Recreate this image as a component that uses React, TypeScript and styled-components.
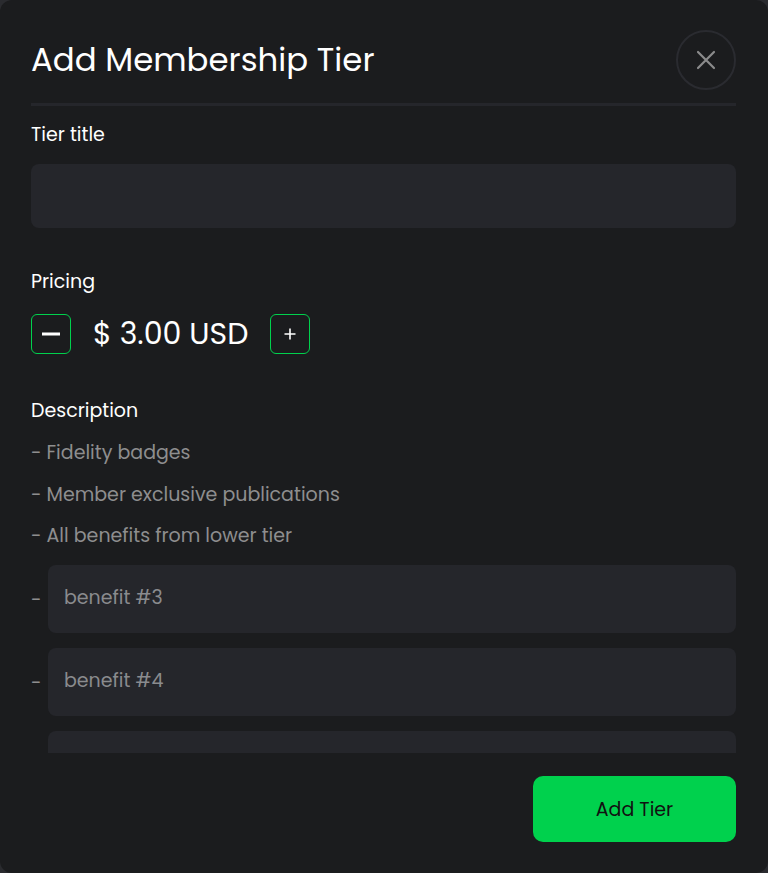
import React, {useState} from 'react';
import styled, {createGlobalStyle} from 'styled-components';

const GlobalStyle = createGlobalStyle`
    html, body {
        margin: 0;
        padding: 0;
        background: #2a2b2f;
    }
    * {
        box-sizing: border-box;
    }
`;

const Modal = styled.div`
    width: 768px;
    height: 873px;
    background: #1b1c1e;
    border-radius: 12px;
    display: flex;
    flex-direction: column;
    font-family: Poppins, Inter, "Open Sans", sans-serif;
    color: #ffffff;
    overflow: hidden;
`;

const Header = styled.div`
    padding: 30px 32px 0 31px;
`;

const HeaderRow = styled.div`
    display: flex;
    align-items: center;
    justify-content: space-between;
    height: 60px;
`;

const Title = styled.h1`
    margin: 0;
    font-size: 32.4px;
    font-weight: 400;
`;

const CloseButton = styled.button`
    width: 60px;
    height: 60px;
    border-radius: 50%;
    border: 2px solid #2a2b30;
    background: transparent;
    display: flex;
    align-items: center;
    justify-content: center;
    padding: 0;
    cursor: pointer;
`;

const Divider = styled.div`
    height: 3px;
    margin-top: 13px;
    background: #25262b;
`;

const Body = styled.div`
    flex: 1;
    overflow: hidden;
    padding: 15px 32px 0 31px;
    display: flex;
    flex-direction: column;
`;

const Label = styled.div<{$gap?: number}>`
    font-size: 19px;
    line-height: 27px;
    font-weight: 400;
    margin-top: ${p => p.$gap ?? 0}px;
`;

const TextInput = styled.div<{$tall?: boolean}>`
    flex: 1;
    height: ${p => (p.$tall ? 68 : 64)}px;
    border-radius: 8px;
    background: #25262b;
    display: flex;
    align-items: center;
    padding: 0 16px 4px;
    font-size: 19px;
    color: #8a8b8e;
`;

const TitleField = styled.div`
    display: flex;
    margin-top: 16px;
`;

const PriceRow = styled.div`
    display: flex;
    align-items: center;
    gap: 22px;
    margin-top: 19px;
`;

const StepButton = styled.button`
    width: 40px;
    height: 40px;
    border: 1px solid #00d14d;
    border-radius: 6px;
    background: transparent;
    display: flex;
    align-items: center;
    justify-content: center;
    padding: 0;
    cursor: pointer;
`;

const Price = styled.div`
    font-size: 30px;
    line-height: 40px;
`;

const List = styled.div`
    display: flex;
    flex-direction: column;
    gap: 14.5px;
    margin-top: 15px;
`;

const ListItem = styled.div`
    font-size: 19px;
    line-height: 27px;
    color: #8e8e8f;
`;

const Benefits = styled.div`
    display: flex;
    flex-direction: column;
    gap: 15px;
    margin-top: 16px;
`;

const BenefitRow = styled.div`
    display: flex;
    align-items: center;
`;

const Dash = styled.span<{$blank?: boolean}>`
    width: 17px;
    font-size: 19px;
    color: #8e8e8f;
    visibility: ${p => (p.$blank ? 'hidden' : 'visible')};
`;

const Footer = styled.div`
    display: flex;
    justify-content: flex-end;
    padding: 23px 32px 31px;
`;

const SubmitButton = styled.button`
    width: 203px;
    height: 66px;
    border: none;
    border-radius: 10px;
    background: #00d14d;
    color: #111;
    font-family: inherit;
    font-size: 19px;
    cursor: pointer;
`;

const benefitsList = ['Fidelity badges', 'Member exclusive publications', 'All benefits from lower tier'];

function App() {
    const [price, setPrice] = useState(3);

    return (
        <>
            <GlobalStyle/>
            <Modal>
                <Header>
                    <HeaderRow>
                        <Title>Add Membership Tier</Title>
                        <CloseButton aria-label="close">
                            <svg width="20" height="20" viewBox="0 0 20 20">
                                <path d="M2 2 L18 18 M18 2 L2 18" stroke="#8b8b8c" strokeWidth="2.2" strokeLinecap="round"/>
                            </svg>
                        </CloseButton>
                    </HeaderRow>
                    <Divider/>
                </Header>
                <Body>
                    <Label>Tier title</Label>
                    <TitleField>
                        <TextInput/>
                    </TitleField>

                    <Label $gap={40}>Pricing</Label>
                    <PriceRow>
                        <StepButton onClick={() => setPrice(Math.max(0, price - 1))}>
                            <svg width="18" height="4" viewBox="0 0 18 4">
                                <rect x="0" y="0.5" width="18" height="3" fill="#fff"/>
                            </svg>
                        </StepButton>
                        <Price>$ {price.toFixed(2)} USD</Price>
                        <StepButton onClick={() => setPrice(price + 1)}>
                            <svg width="12" height="12" viewBox="0 0 12 12">
                                <path d="M6 0.5 V11.5 M0.5 6 H11.5" stroke="#fff" strokeWidth="1.6"/>
                            </svg>
                        </StepButton>
                    </PriceRow>

                    <Label $gap={43}>Description</Label>
                    <List>
                        {benefitsList.map(b => <ListItem key={b}>- {b}</ListItem>)}
                    </List>
                    <Benefits>
                        {['benefit #3', 'benefit #4', ''].map((b, i) =>
                            <BenefitRow key={i}>
                                <Dash $blank={b === ''}>-</Dash>
                                <TextInput $tall>{b}</TextInput>
                            </BenefitRow>)}
                    </Benefits>
                </Body>
                <Footer>
                    <SubmitButton>Add Tier</SubmitButton>
                </Footer>
            </Modal>
        </>
    );
}

export default App;
